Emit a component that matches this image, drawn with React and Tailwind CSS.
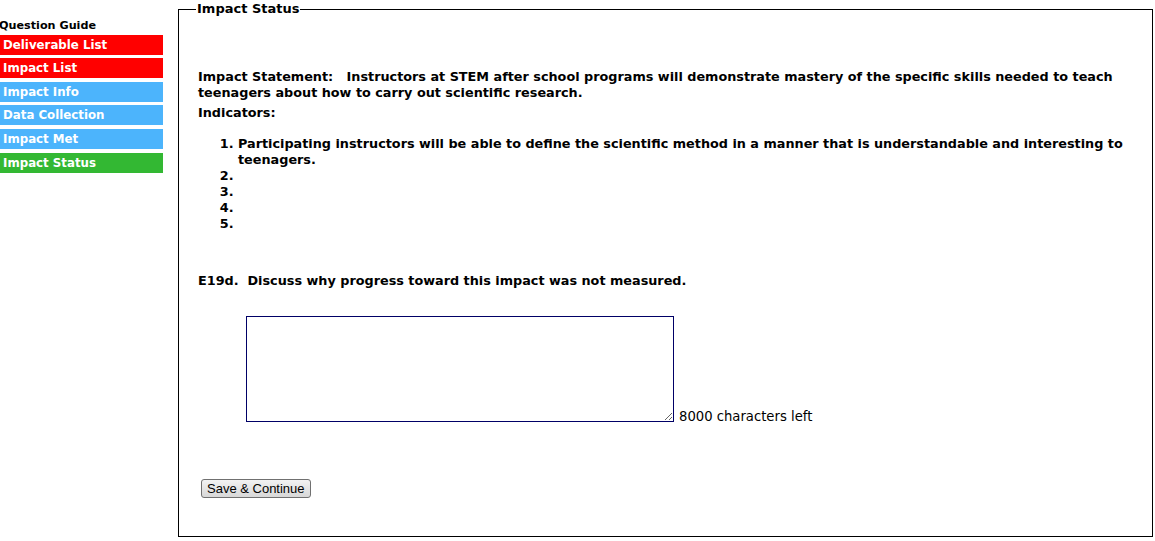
import React, { useState } from "react"

const guide = [
  { label: "Deliverable List", color: "bg-[#ff0000]", mt: "mt-[3px]" },
  { label: "Impact List", color: "bg-[#ff0000]", mt: "mt-[3px]" },
  { label: "Impact Info", color: "bg-[#4cb4fc]", mt: "mt-[4px]" },
  { label: "Data Collection", color: "bg-[#4cb4fc]", mt: "mt-[3px]" },
  { label: "Impact Met", color: "bg-[#4cb4fc]", mt: "mt-[4px]" },
  { label: "Impact Status", color: "bg-[#33b833]", mt: "mt-[4px]" },
]

const verdana = "font-['Verdana','DejaVu_Sans',sans-serif]"

export default function App() {
  const [text, setText] = useState("")
  const left = 8000 - text.length

  return (
    <div className={`flex bg-white text-black min-h-[541px] ${verdana}`}>
      <div className="w-[163px] shrink-0 pt-[20px]">
        <div className="text-[11.2px] font-bold leading-[12px] -ml-[1px]">Question Guide</div>
        {guide.map((g) => (
          <div
            key={g.label}
            className={`${g.color} ${g.mt} h-[20px] pl-[3px] text-[11.8px] font-bold leading-[20px] text-white`}
          >
            {g.label}
          </div>
        ))}
      </div>

      <fieldset className="ml-[15px] mt-[1px] w-[975px] h-[536px] border border-black pl-[17px] pr-[20px]">
        <legend className="px-[1px] text-[13px] font-bold leading-[16px]">Impact Status</legend>

        <div className="pl-[2px] text-[12.8px] font-bold leading-[16px]">
          <p className="mt-[52px]">
            Impact Statement:&nbsp;&nbsp; Instructors at STEM after school programs will demonstrate mastery of the specific skills needed to teach teenagers about how to carry out scientific research.
          </p>
          <p className="mt-[4px]">Indicators:</p>

          <ol className="mt-[15px] pl-[40px] list-decimal">
            <li>Participating instructors will be able to define the scientific method in a manner that is understandable and interesting to teenagers.</li>
            <li></li>
            <li></li>
            <li></li>
            <li></li>
          </ol>

          <p className="mt-[41px]">E19d.&nbsp; Discuss why progress toward this impact was not measured.</p>

          <div className="mt-[27px] pl-[48px] flex items-end">
            <textarea
              value={text}
              onChange={(e) => setText(e.target.value)}
              maxLength={8000}
              className="block w-[428px] h-[106px] border border-[#000066] bg-white p-[2px] text-[13px] font-normal outline-none"
            />
            <span className="ml-[5px] text-[13.2px] font-normal leading-[14px] mb-[-2px]">
              {left} characters left
            </span>
          </div>

          <button
            type="button"
            className="mt-[57px] ml-[3px] h-[19px] px-[5px] rounded-[3px] border border-[#707070] bg-gradient-to-b from-[#f2f2f2] to-[#d8d8d8] font-['Liberation_Sans',Arial,sans-serif] text-[13px] font-normal leading-[17px] text-black"
          >
            Save &amp; Continue
          </button>
        </div>
      </fieldset>
    </div>
  )
}
